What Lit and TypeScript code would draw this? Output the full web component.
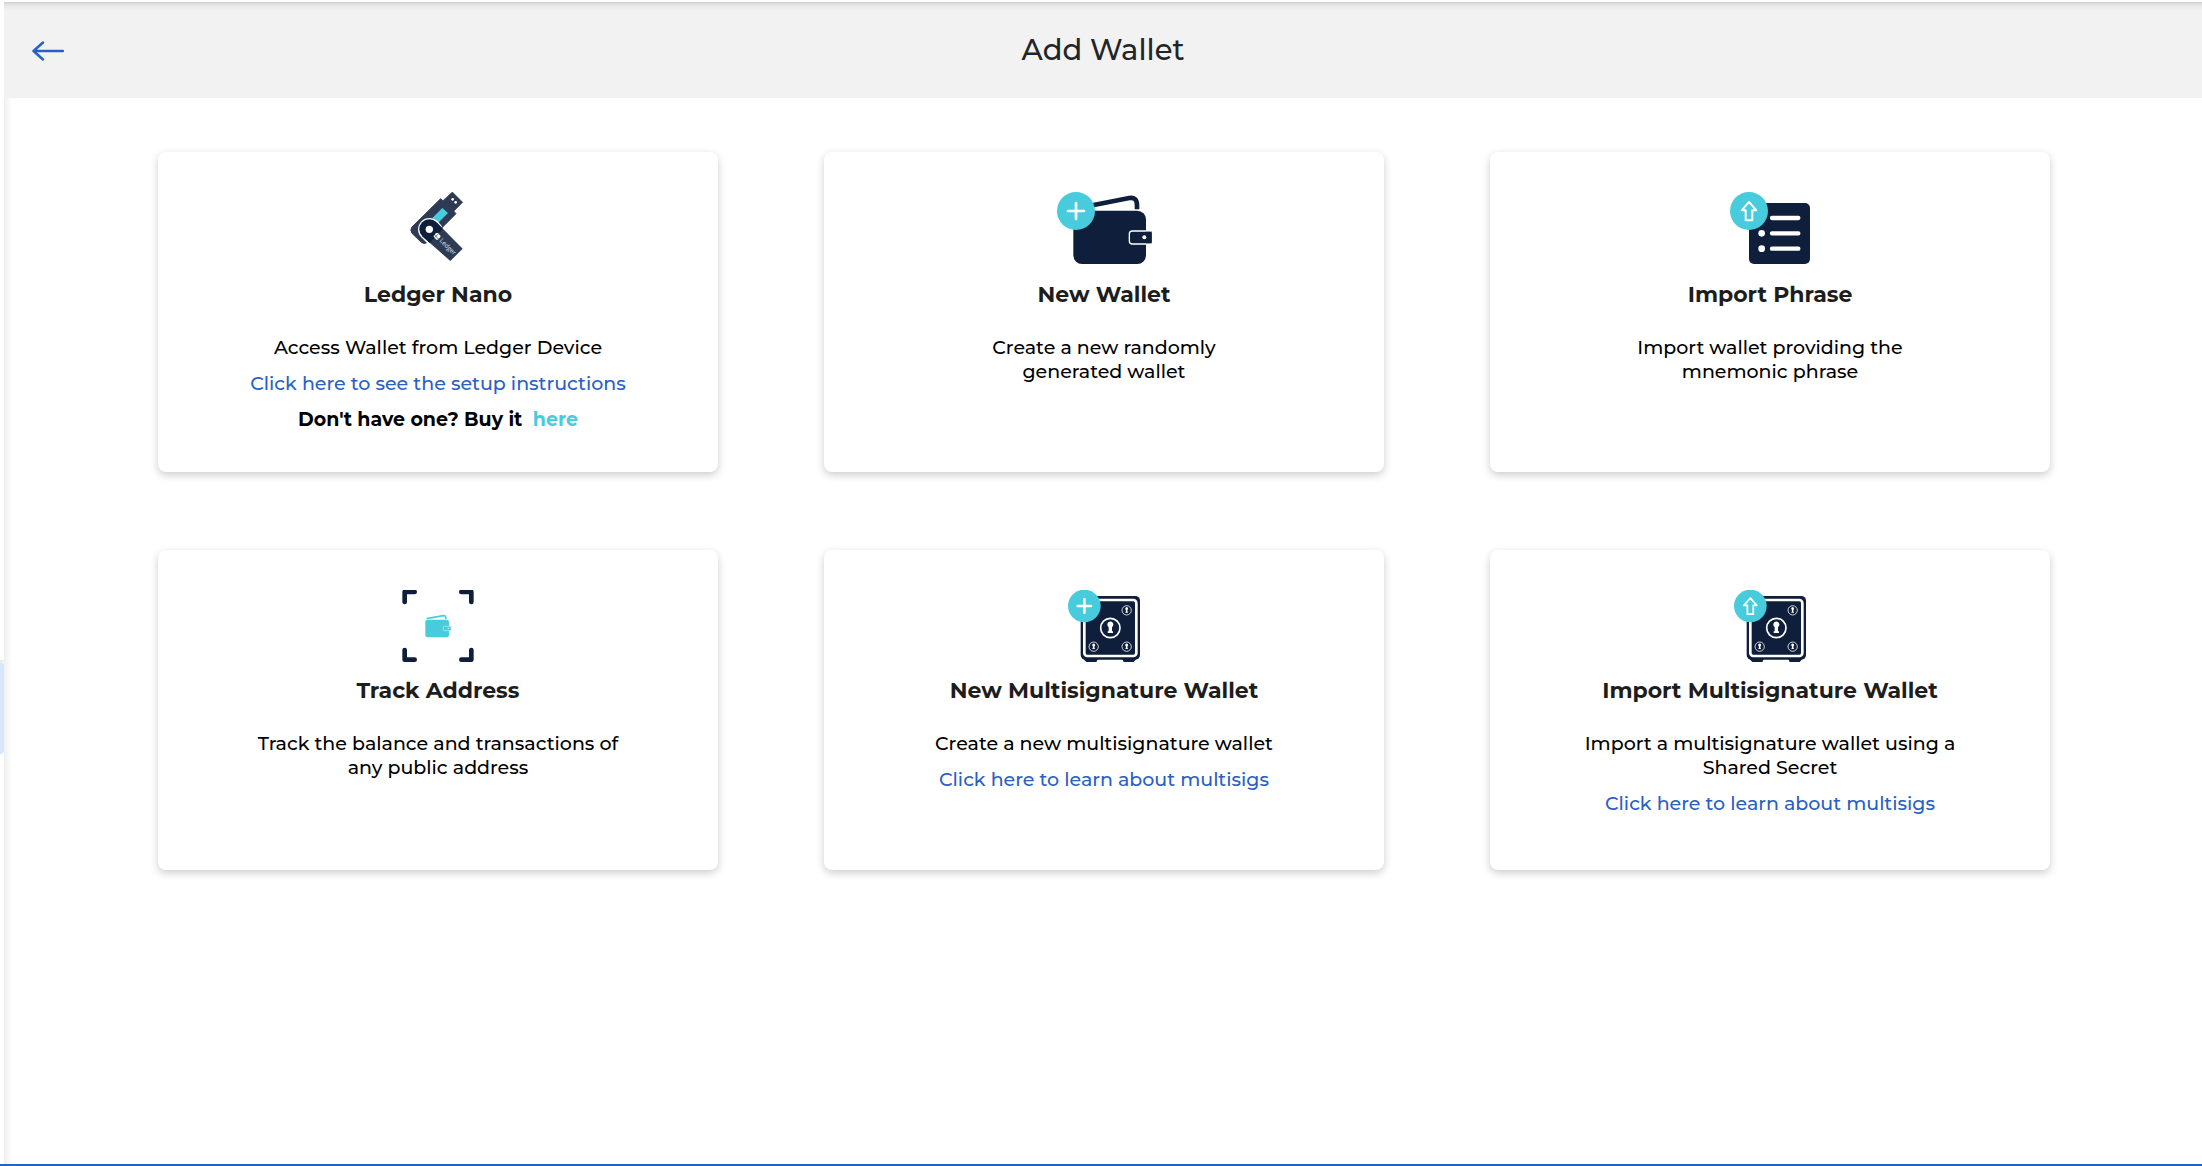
import { LitElement, html, svg, css, nothing } from "lit";
import type { SVGTemplateResult } from "lit";
import { customElement } from "lit/decorators.js";

interface WalletOption {
  title: string;
  description: string;
  icon: SVGTemplateResult;
  viewBox: string;
  iconHeight: number;
  link?: string;
  buy?: boolean;
}

const NAVY = "#0f1e3a";
const SLATE = "#2f3b54";
const TEAL = "#48cbdc";

const ledgerIcon = svg`
  <path d="M187 36L218 67L189 96L157 64z" fill=${SLATE} stroke=${SLATE} stroke-width="2" stroke-linejoin="round" />
  <path d="M152 56L165 68L186 88L198 101L112 187Q103 194 94 187L66 160Q59 150 66 141z" fill=${SLATE} stroke=${SLATE} stroke-width="3" stroke-linejoin="round" />
  <path d="M157 84L174 99L144 129L127 114z" fill=${TEAL} />
  <circle cx="188" cy="58" r="4" fill="#fff" />
  <circle cx="197" cy="67" r="4" fill="#fff" />
  <path d="M156 139L143 124A34 34 0 1 0 94 172L114 192z" fill="#fff" />
  <path d="M141 128L218 206L181 243L96 168z" fill=${SLATE} />
  <path d="M139 126A30 30 0 1 0 97 169L119 189L158 147z" fill=${NAVY} />
  <circle cx="118" cy="148" r="11" fill="#fff" />
  <g transform="translate(142 169) rotate(45)">
    <rect x="-9" y="-8" width="17" height="17" rx="4" fill="#fff" />
    <path d="M-3 -9V9M-9 3H9" stroke=${SLATE} stroke-width="2" />
    <text x="14" y="6" fill="#dfe2e7" font-size="19" font-family="Open Sans, sans-serif">Ledger</text>
  </g>
`;

const plusBadge = (cx: number, cy: number, r: number, arm: number) => svg`
  <circle cx=${cx} cy=${cy} r=${r} fill=${TEAL} />
  <path d="M${cx - arm} ${cy}H${cx + arm}M${cx} ${cy - arm}V${cy + arm}" stroke="#fff" stroke-width="8" stroke-linecap="round" />
`;

const arrowBadge = (cx: number, cy: number, r: number, s: number) => svg`
  <circle cx=${cx} cy=${cy} r=${r} fill=${TEAL} />
  <path
    transform="translate(${cx} ${cy}) scale(${s})"
    d="M0 -27L22 -2H10V28H-10V-2H-22z"
    fill="none" stroke="#fff" stroke-width="6" stroke-linejoin="round" />
`;

const walletIcon = svg`
  <path d="M150 77L268 54Q291 50 291 76V88" fill="none" stroke=${NAVY} stroke-width="14" />
  <rect x="100" y="92" width="218" height="160" rx="26" fill=${NAVY} />
  <path d="M335 153H277Q268 153 268 162V183Q268 192 277 192H335" fill=${NAVY} stroke="#fff" stroke-width="4" />
  <path d="M318 155H329Q335 155 335 161V184Q335 190 329 190H318z" fill=${NAVY} />
  <circle cx="313" cy="172" r="6" fill="#fff" />
  ${plusBadge(108, 93, 57, 24)}
`;

const phraseIcon = svg`
  <rect x="102" y="69" width="183" height="183" rx="15" fill=${NAVY} />
  <path d="M171 114H250M171 160H250M171 206H250" stroke="#fff" stroke-width="13" stroke-linecap="round" />
  <circle cx="140" cy="160" r="10" fill="#fff" />
  <circle cx="140" cy="206" r="10" fill="#fff" />
  ${arrowBadge(102, 93, 57, 1)}
`;

const trackIcon = svg`
  <path d="M44 81V51H74M214 51H244V81M44 225V254H74M214 254H244V225" fill="none" stroke=${NAVY} stroke-width="14" stroke-linecap="round" stroke-linejoin="round" />
  <path d="M110 131L160 122Q168 121 168 132" fill="none" stroke=${TEAL} stroke-width="5" />
  <rect x="106" y="134" width="71" height="53" rx="7" fill=${TEAL} />
  <rect x="160" y="154" width="23" height="13" rx="3" fill=${TEAL} stroke="#c5f0f5" stroke-width="2" />
  <circle cx="175" cy="160" r="2" fill="#fff" />
`;

const keyhole = (cx: number, cy: number, s: number) => svg`
  <g transform="translate(${cx} ${cy}) scale(${s})">
    <circle r="29" fill="none" stroke="#fff" stroke-width="5" />
    <path d="M-8 15V10H-5V-3A9 9 0 1 1 5 -3V10H8V15z" fill="#fff" />
  </g>
`;

const safeBody = svg`
  <path d="M83 250H130L124 261H94zM201 250H246L236 261H206z" fill=${NAVY} />
  <rect x="77" y="63" width="178" height="191" rx="14" fill=${NAVY} />
  <rect x="88" y="75" width="156" height="168" rx="9" fill=${NAVY} stroke="#fff" stroke-width="8" />
  ${keyhole(166, 159, 1)}
  ${keyhole(215, 106, 0.48)}
  ${keyhole(116, 215, 0.48)}
  ${keyhole(215, 215, 0.48)}
`;

const newSafeIcon = svg`${safeBody}${plusBadge(88, 93, 49, 20)}`;
const importSafeIcon = svg`
  <g transform="translate(3 0)">${safeBody}</g>
  ${arrowBadge(91, 93, 49, 0.88)}
`;

const OPTIONS: WalletOption[] = [
  {
    title: "Ledger Nano",
    description: "Access Wallet from Ledger Device",
    link: "Click here to see the setup instructions",
    buy: true,
    icon: ledgerIcon,
    viewBox: "-6 36 300 222",
    iconHeight: 74,
  },
  {
    title: "New Wallet",
    description: "Create a new randomly\ngenerated wallet",
    icon: walletIcon,
    viewBox: "42 36 300 222",
    iconHeight: 74,
  },
  {
    title: "Import Phrase",
    description: "Import wallet providing the\nmnemonic phrase",
    icon: phraseIcon,
    viewBox: "15 36 300 222",
    iconHeight: 74,
  },
  {
    title: "Track Address",
    description: "Track the balance and transactions of\nany public address",
    icon: trackIcon,
    viewBox: "-6 45 300 216",
    iconHeight: 72,
  },
  {
    title: "New Multisignature Wallet",
    description: "Create a new multisignature wallet",
    link: "Click here to learn about multisigs",
    icon: newSafeIcon,
    viewBox: "-3 45 300 216",
    iconHeight: 72,
  },
  {
    title: "Import Multisignature Wallet",
    description: "Import a multisignature wallet using a\nShared Secret",
    link: "Click here to learn about multisigs",
    icon: importSafeIcon,
    viewBox: "0 45 300 216",
    iconHeight: 72,
  },
];

@customElement("app-root")
export class AppRoot extends LitElement {
  static styles = css`
    :host {
      display: block;
      font-family: Montserrat, Inter, "Liberation Sans", sans-serif;
      color: #000;
    }
    * {
      box-sizing: border-box;
    }
    .page {
      display: grid;
      grid-template-columns: 4px 1fr;
      min-height: 100vh;
      padding-top: 2px;
      background: #fff;
      border-bottom: 2px solid #2860c6;
    }
    .rail {
      display: flex;
      flex-direction: column;
      padding-top: 658px;
    }
    .rail-item {
      height: 94px;
      border-top: 2px solid #ebebeb;
    }
    .rail-item::before {
      content: "";
      display: block;
      height: 92px;
      background: #d8e6fe;
      border-radius: 0 4px 4px 0;
    }
    .content {
      background: linear-gradient(to right, #efefef, #fff 8px);
    }
    .header {
      display: grid;
      grid-template-columns: 1fr auto 1fr;
      align-items: center;
      height: 96px;
      padding: 0 28px;
      background: linear-gradient(#cfcfcf, #e6e6e6 3px, #f2f2f2 8px);
    }
    .back {
      display: flex;
      width: 32px;
      padding: 2px 0 0;
      border: 0;
      background: none;
      cursor: pointer;
    }
    .heading {
      margin: 0;
      font-size: 29px;
      line-height: 36px;
      font-weight: 500;
      color: #212529;
    }
    .cards {
      display: grid;
      grid-template-columns: repeat(3, 1fr);
      gap: 78px 106px;
      padding: 54px 152px 54px 154px;
    }
    .card {
      display: flex;
      flex-direction: column;
      align-items: center;
      min-height: 320px;
      padding: 40px 24px 20px;
      border-radius: 8px;
      background: #fff;
      box-shadow: 0 3px 8px rgba(0, 0, 0, 0.2);
      text-align: center;
      font-size: 19px;
      line-height: 24px;
      font-weight: 500;
      cursor: pointer;
    }
    .icon {
      display: block;
      flex: none;
    }
    .title {
      margin: 15px 0 27px;
      font-size: 22px;
      line-height: 28px;
      font-weight: 700;
      color: #1d1d1d;
    }
    .text {
      margin: 0 0 12px;
      white-space: pre-line;
    }
    .strong {
      font-weight: 700;
    }
    .link {
      color: #2860c6;
      text-decoration: none;
    }
    .buy {
      margin-left: 5px;
      color: #48cbdc;
      text-decoration: none;
    }
  `;

  private renderCard(option: WalletOption) {
    return html`
      <article class="card">
        <svg class="icon" width="100" height=${option.iconHeight} viewBox=${option.viewBox} aria-hidden="true">
          ${option.icon}
        </svg>
        <h2 class="title">${option.title}</h2>
        <p class="text">${option.description}</p>
        ${option.link ? html`<p class="text"><a class="link" href="#">${option.link}</a></p>` : nothing}
        ${option.buy ? html`<p class="text strong">Don't have one? Buy it <a class="buy" href="#">here</a></p>` : nothing}
      </article>
    `;
  }

  render() {
    return html`
      <div class="page">
        <div class="rail"><div class="rail-item"></div></div>
        <main class="content">
          <header class="header">
            <button class="back" aria-label="Back">
              <svg width="32" height="20" viewBox="0 0 32 20" fill="none" stroke="#2860c6" stroke-width="2.5" stroke-linecap="round" stroke-linejoin="round">
                <path d="M31 10H2M11 1.5L1.5 10L11 18.5" />
              </svg>
            </button>
            <h1 class="heading">Add Wallet</h1>
          </header>
          <section class="cards">${OPTIONS.map((option) => this.renderCard(option))}</section>
        </main>
      </div>
    `;
  }
}
